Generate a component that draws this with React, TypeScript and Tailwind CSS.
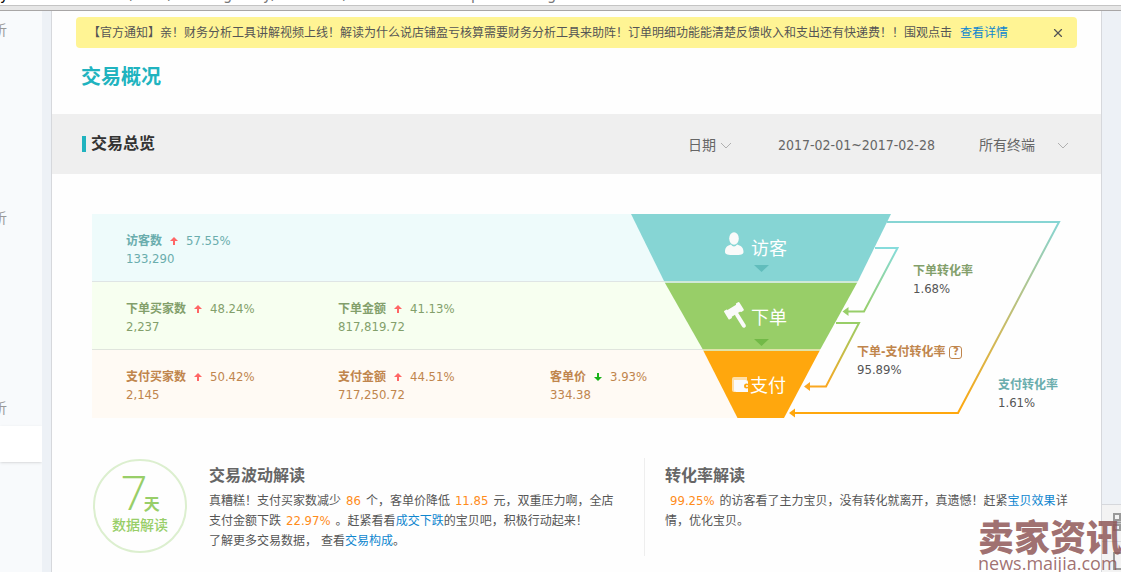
import { X } from 'lucide-react';

type Metric = { label: string; change: string; down?: boolean; value: string };

const rows: { id: string; className: string; metrics: Metric[] }[] = [
  {
    id: 'visit',
    className: 'bg-[#eefbfb] text-[#6aadad] border-b border-[#dfe5e5]',
    metrics: [{ label: '访客数', change: '57.55%', value: '133,290' }],
  },
  {
    id: 'order',
    className: 'bg-[#f7fff0] text-[#839f6b] border-b border-[#e0e5dd]',
    metrics: [
      { label: '下单买家数', change: '48.24%', value: '2,237' },
      { label: '下单金额', change: '41.13%', value: '817,819.72' },
    ],
  },
  {
    id: 'pay',
    className: 'bg-[#fffaf4] text-[#c0854c]',
    metrics: [
      { label: '支付买家数', change: '50.42%', value: '2,145' },
      { label: '支付金额', change: '44.51%', value: '717,250.72' },
      { label: '客单价', change: '3.93%', down: true, value: '334.38' },
    ],
  },
];

function TrendArrow({ down }: { down?: boolean }) {
  return (
    <svg width="8" height="8" viewBox="0 0 8 8" className={down ? 'text-[#19b219]' : 'text-[#ff6666]'}>
      <path
        d={down ? 'M3 0h2v4h3L4 8 0 4h3z' : 'M4 0l4 4H5v4H3V4H0z'}
        fill="currentColor"
      />
    </svg>
  );
}

function Chevron() {
  return (
    <svg width="12" height="7" viewBox="0 0 12 7" className="pointer-events-none shrink-0">
      <path d="M1 1l5 5 5-5" fill="none" stroke="#b0b0b0" strokeWidth="1" />
    </svg>
  );
}

function MetricCell({ label, change, down, value }: Metric) {
  return (
    <div className="w-[212px] shrink-0 leading-[18px]">
      <div className="flex items-center">
        <span className="text-[12px] font-bold">{label}</span>
        <span className="mx-2">
          <TrendArrow down={down} />
        </span>
        <span className="text-[13px]">{change}</span>
      </div>
      <div className="text-[13px]">{value}</div>
    </div>
  );
}

function Funnel() {
  return (
    <svg width="430" height="204" viewBox="0 0 430 204" className="block">
      <defs>
        <linearGradient id="visitOrder" gradientUnits="userSpaceOnUse" x1="0" y1="34" x2="0" y2="98">
          <stop offset="0" stopColor="#86dcdc" />
          <stop offset="1" stopColor="#98ce68" />
        </linearGradient>
        <linearGradient id="orderPay" gradientUnits="userSpaceOnUse" x1="0" y1="109" x2="0" y2="173">
          <stop offset="0" stopColor="#98ce68" />
          <stop offset="1" stopColor="#fba720" />
        </linearGradient>
        <linearGradient id="visitPay" gradientUnits="userSpaceOnUse" x1="0" y1="8" x2="0" y2="199">
          <stop offset="0" stopColor="#86d5d4" />
          <stop offset="1" stopColor="#ffa70d" />
        </linearGradient>
      </defs>

      {/* row backgrounds running into the funnel */}
      <path d="M0 0l34 68H0z" fill="#eefbfb" />
      <path d="M0 68h34l38 68H0z" fill="#f7fff0" />
      <path d="M0 136h72l35 68H0z" fill="#fffaf4" />
      <path d="M0 67.5h34M0 135.5h72" stroke="#dfe5e0" />

      <path d="M0 0h260l-33 67H33z" fill="#86d5d4" />
      <path d="M33 67h194l-1 2H34z" fill="#cfe9d8" />
      <path d="M34 69h192l-36.500 66H71.500z" fill="#98ce68" />
      <path d="M71.500 135h118l-1 2H72.500z" fill="#dfe3a8" />
      <path d="M72.500 137h116L153 204h-46.500z" fill="#ffa70d" />
      <path d="M123 51h15l-7.500 7z" fill="#61bdbc" />
      <path d="M123 125h15l-7.500 7z" fill="#72b947" />

      {/* visitor */}
      <g fill="#fafafa">
        <ellipse cx="103" cy="24.500" rx="4.800" ry="6.200" />
        <path d="M94 38c0-5 2.500-6.500 6-7.500 1.500 2.500 4.500 2.500 6 0 3.500 1 6.500 2.500 6.500 7.500 0 2.500-2.500 3-9 3s-9.500-.5-9.500-3z" />
      </g>
      {/* gavel */}
      <g fill="#fafafa" transform="rotate(-32 102.500 97)">
        <rect x="97" y="93" width="12" height="8" />
        <rect x="94" y="92" width="4" height="10" rx="1" />
        <rect x="108" y="92" width="4" height="10" rx="1" />
        <rect x="101.500" y="100" width="4" height="17" rx="2" />
      </g>
      {/* wallet */}
      <path d="M101 165a2 2 0 0 1 2-2h13v3h-12v12h-1a2 2 0 0 1-2-2z" fill="#ffdfa8" />
      <path d="M104 166h11a2 2 0 0 1 2 2v10h-12a2 2 0 0 1-2-2v-10z" fill="#fafafa" />
      <circle cx="115.500" cy="172" r="2.500" fill="#ffa70d" />
      <circle cx="116" cy="172" r="1" fill="#fafafa" />

      <g fill="#fff" fontSize="18">
        <text x="120" y="41">访客</text>
        <text x="120" y="110">下单</text>
        <text x="119" y="178">支付</text>
      </g>

      <g fill="none" strokeWidth="2">
        <path d="M256 8h172L327 199H163" stroke="url(#visitPay)" />
        <path d="M244 34h22.500L233 97.500h-16" stroke="url(#visitOrder)" />
        <path d="M205 109h23L195 172.500h-16" stroke="url(#orderPay)" />
      </g>
      <path d="M211.500 97.500l6-4.500v9z" fill="#98ce68" />
      <path d="M173 172.500l6-4.500v9z" fill="#fba720" />
      <path d="M158 199l6-4.500v9z" fill="#ffa70d" />
    </svg>
  );
}

function Filter({ id, label, className }: { id: string; label: string; className: string }) {
  return (
    <div className={`flex items-center ${className}`}>
      <select id={id} aria-label={label} className="min-w-0 flex-1 appearance-none bg-transparent text-[14px] outline-none">
        <option>{label}</option>
      </select>
      <Chevron />
    </div>
  );
}

function Num({ children }: { children: string }) {
  return <span className="mx-[5px] text-[13px] text-[#ff8c1a]">{children}</span>;
}

export default function App() {
  return (
    <div className="relative flex h-screen flex-col overflow-hidden bg-white font-['DejaVu_Sans_Condensed','Open_Sans','Noto_Sans_CJK_SC',sans-serif] text-[#555]">
      {/* lower edge of the address bar */}
      <div className="flex h-[5px] shrink-0 items-end overflow-hidden text-[16px] leading-[20px] text-[#777]">
        <span className="w-[130px] text-black">y</span>
        <span className="w-[38px]">/</span>
        <span className="w-[55px]">/</span>
        <span className="w-[40px]">g</span>
        <span className="w-[80px]">y/</span>
        <span className="w-[128px]">/</span>
        <span className="w-[76px]">p</span>
        <span>g</span>
      </div>
      <div className="h-[6px] shrink-0 border-t border-b border-t-[#c4c4c4] border-b-[#a8a6a6] bg-[#e6e6e6]" />

      <div className="flex min-h-0 flex-1 bg-[#edf1f6]">
        <aside className="w-[42px] shrink-0 overflow-hidden bg-[#f8fafc] pt-2 text-[14px] text-[#999]">
          <div className="-ml-[7px] h-[188px] leading-[22px]">析</div>
          <div className="-ml-[7px] h-[190px] leading-[22px]">析</div>
          <div className="-ml-[7px] h-[29px] leading-[22px]">析</div>
          <div className="h-9 bg-white shadow" />
        </aside>

        <main className="ml-[9px] min-w-0 flex-1 border-x border-[#d6d8dc] bg-[#fefefe]">
          <div className="px-6 pt-[6px]">
            <div className="flex h-[31px] items-center rounded bg-[#fff494] pr-3 pl-3 text-[12px]">
              <p className="whitespace-nowrap">
                【官方通知】亲！财务分析工具讲解视频上线！解读为什么说店铺盈亏核算需要财务分析工具来助阵！订单明细功能能清楚反馈收入和支出还有快递费！！围观点击
                <a href="#detail" className="ml-2 text-[#0e86cf]">查看详情</a>
              </p>
              <button aria-label="关闭" className="ml-auto">
                <X size={14} strokeWidth={2} />
              </button>
            </div>
          </div>
          <h1 className="px-[29px] pt-[14px] pb-[22px] text-[20px] leading-[30px] font-bold text-[#20b3bf]">交易概况</h1>

          <div className="flex h-[60px] items-center bg-[#efefef] pr-8 pl-[30px] text-[14px] text-[#666]">
            <div className="mr-[5px] h-4 w-1 bg-[#20b3bf]" />
            <h2 className="text-[16px] font-bold text-[#333]">交易总览</h2>
            <div className="ml-auto flex items-center pt-[2px]">
              <Filter id="range" label="日期" className="w-[44px]" />
              <span className="ml-[46px] w-[201px]">2017-02-01~2017-02-28</span>
              <Filter id="terminal" label="所有终端" className="w-[90px]" />
            </div>
          </div>

          <section className="flex px-10 pt-10">
            <div className="relative z-10 min-w-0 flex-1">
              {rows.map((row) => (
                <div key={row.id} className={`flex h-[68px] pt-[18px] pl-[34px] ${row.className}`}>
                  {row.metrics.map((m) => (
                    <MetricCell key={m.label} {...m} />
                  ))}
                </div>
              ))}
            </div>
            <div className="relative shrink-0 text-[12px] leading-[18px]">
              <Funnel />
              <div className="absolute top-12 left-[282px]">
                <div className="font-bold text-[#839f6b]">下单转化率</div>
                <div className="text-[13px]">1.68%</div>
              </div>
              <div className="absolute top-[129px] left-[226px]">
                <div className="flex items-center font-bold whitespace-nowrap text-[#c0854c]">
                  下单-支付转化率
                  <span className="ml-1 flex h-[13px] w-[13px] items-center justify-center rounded-[3px] border border-current text-[11px]">?</span>
                </div>
                <div className="text-[13px]">95.89%</div>
              </div>
              <div className="absolute top-[162px] left-[367px]">
                <div className="font-bold whitespace-nowrap text-[#6aadad]">支付转化率</div>
                <div className="text-[13px]">1.61%</div>
              </div>
            </div>
          </section>

          <section className="flex pt-10 pr-8 pl-[41px]">
            <div className="mt-px flex h-[94px] w-[94px] shrink-0 flex-col items-center rounded-full border-2 border-[#dcefcf] pt-2 text-[#98ce68]">
              <div className="flex h-[47px] items-baseline leading-[46px]">
                <span className="font-['Open_Sans'] text-[48px] font-light">7</span>
                <span className="-ml-1 text-[16px] font-bold">天</span>
              </div>
              <div className="text-[14px] leading-[18px] font-medium">数据解读</div>
            </div>
            <div className="ml-[22px] min-h-[98px] min-w-0 flex-1 border-r border-[#eee] pr-6 text-[12px] leading-5">
              <h3 className="pt-[6px] pb-[3px] text-[16px] leading-[24px] font-bold text-[#666]">交易波动解读</h3>
              <p>
                真糟糕！支付买家数减少<Num>86</Num>个，客单价降低<Num>11.85</Num>元，双重压力啊，全店支付金额下跌<Num>22.97%</Num>。赶紧看看
                <a href="#products" className="text-[#0e86cf]">成交下跌</a>的宝贝吧，积极行动起来！
              </p>
              <p>
                了解更多交易数据，<span className="ml-1">查看</span>
                <a href="#structure" className="text-[#0e86cf]">交易构成</a>。
              </p>
            </div>
            <div className="-mr-1 ml-5 w-[408px] shrink-0 text-[12px] leading-5">
              <h3 className="pt-[6px] pb-[3px] text-[16px] leading-[24px] font-bold text-[#666]">转化率解读</h3>
              <p>
                <Num>99.25%</Num>的访客看了主力宝贝，没有转化就离开，真遗憾！赶紧
                <a href="#effect" className="text-[#0e86cf]">宝贝效果</a>详情，优化宝贝。
              </p>
            </div>
          </section>
        </main>

        <aside className="flex w-[19px] shrink-0 flex-col justify-end">
          <div className="h-[37px] overflow-hidden border-t border-[#d6d8dc] bg-[#f3f3f3] pt-2 pl-[11px] text-[#999]">
            <svg width="18" height="18" viewBox="0 0 18 18" fill="none" stroke="currentColor" strokeWidth="2">
              <path d="M1 1h6v6H1zM11 1h6v6h-6zM1 12h6v5H1zM0 9.500h18" />
            </svg>
          </div>
          <div className="h-[31px] overflow-hidden border-t border-[#d6d8dc] bg-[#f3f3f3] pt-[10px] pl-[11px] text-[#999]">
            <svg width="18" height="18" viewBox="0 0 18 18" fill="none" stroke="currentColor" strokeWidth="2">
              <path d="M1 1h16v16H1z" />
            </svg>
          </div>
        </aside>
      </div>

      {/* site watermark */}
      <div className="pointer-events-none absolute right-0 bottom-0 z-20 w-[143px] whitespace-nowrap text-[#8f5858]/85">
        <div className="text-[36px] leading-[30px] font-black">卖家资讯</div>
        <div className="font-['Open_Sans'] text-[18px] leading-[18px]">news.maijia.com</div>
      </div>
    </div>
  );
}
